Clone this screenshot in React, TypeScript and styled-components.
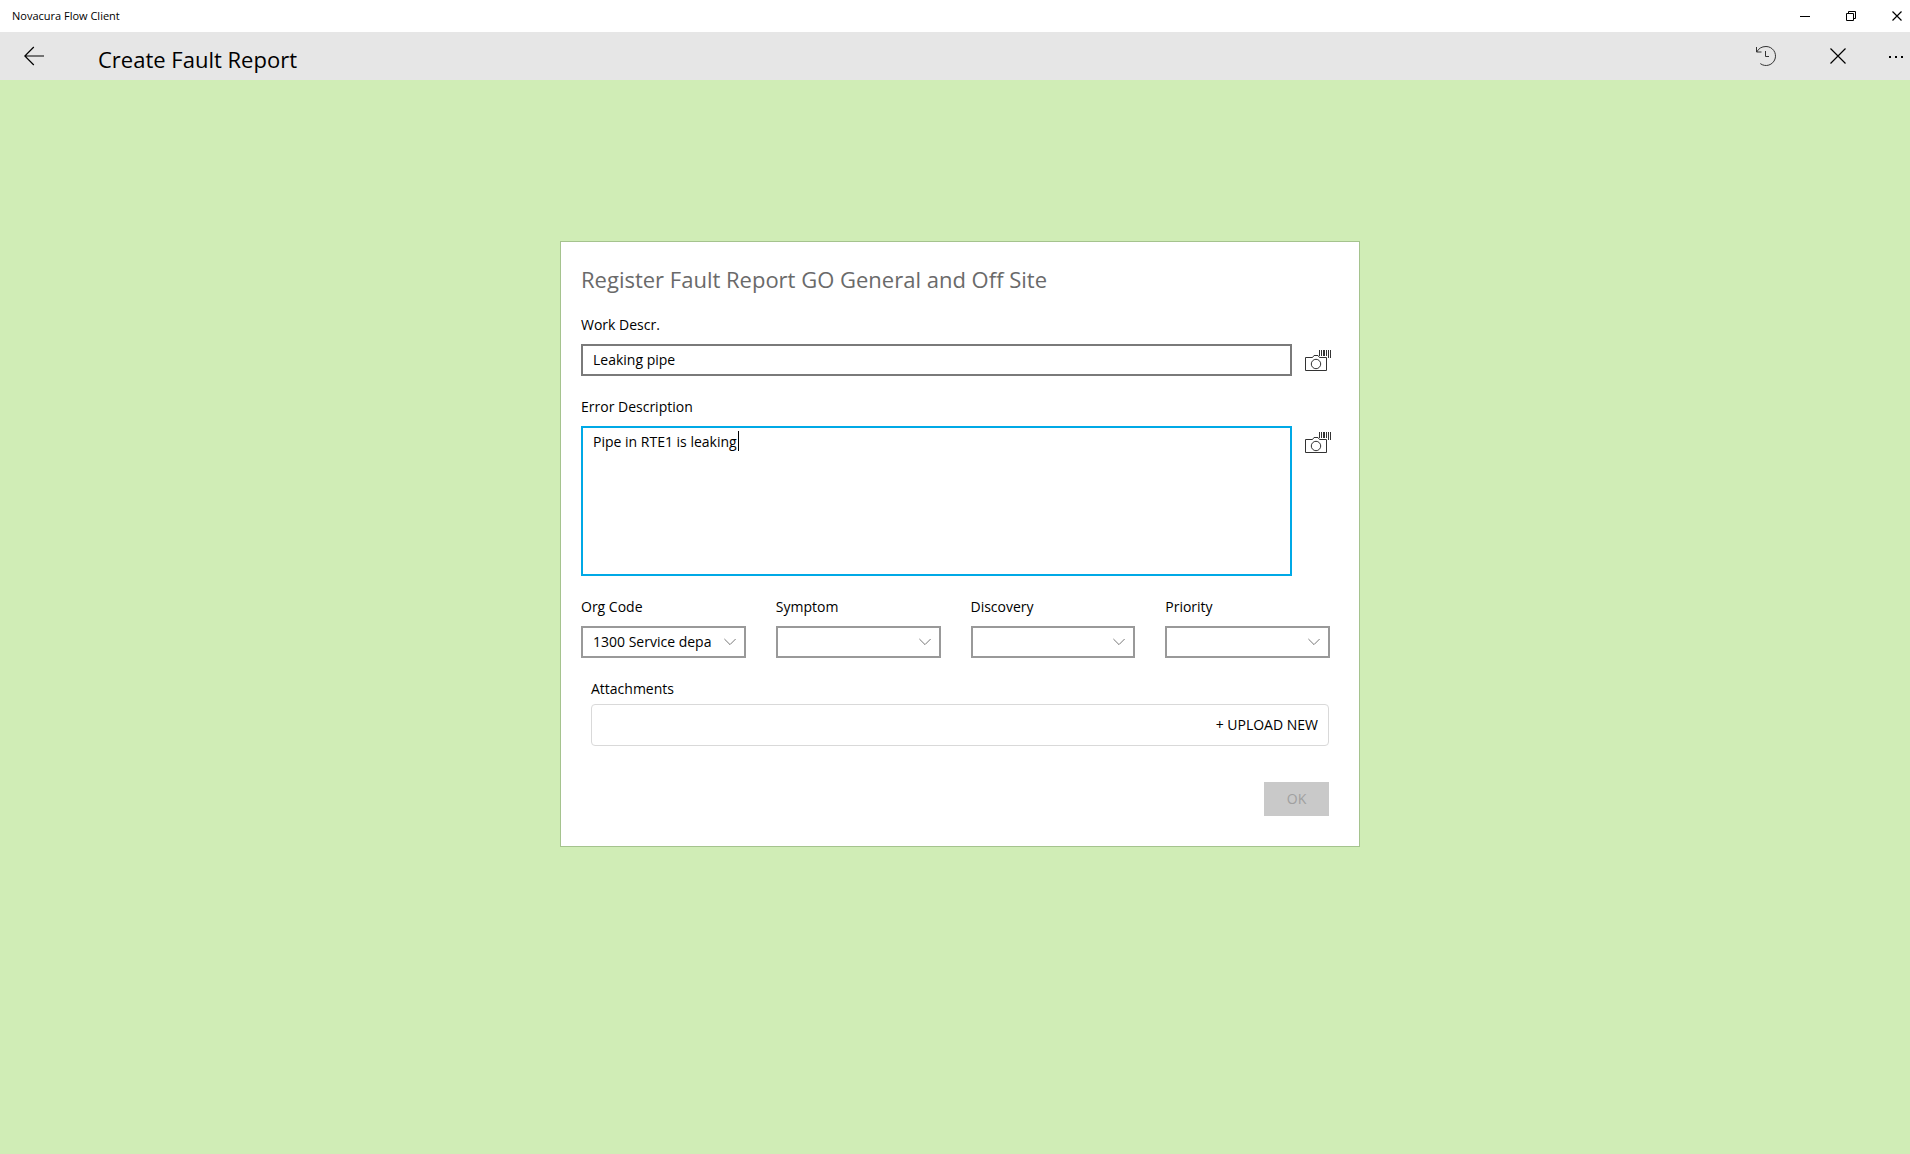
import React, { useLayoutEffect, useRef, useState } from "react";
import styled, { createGlobalStyle } from "styled-components";

const GlobalStyle = createGlobalStyle`
  * { box-sizing: border-box; }
  body {
    margin: 0;
    background: #d0edb6;
    color: #000;
    font-family: "Segoe UI", "Open Sans", "Noto Sans", sans-serif;
    font-size: 14px;
    line-height: 20px;
  }
  button, input, select, textarea { font: inherit; color: inherit; margin: 0; }
`;

const Page = styled.div`
  display: flex;
  flex-direction: column;
  min-height: 100vh;
`;

const TitleBar = styled.header`
  display: flex;
  align-items: center;
  justify-content: space-between;
  height: 32px;
  padding-left: 12px;
  background: #fff;
  font-size: 11px;
  line-height: 16px;
`;

const WindowControls = styled.div`
  display: flex;
  gap: 20px;
`;

const IconButton = styled.button<{ $width: number; $height: number }>`
  display: flex;
  align-items: center;
  justify-content: center;
  width: ${(p) => p.$width}px;
  height: ${(p) => p.$height}px;
  padding: 0;
  border: 0;
  background: transparent;
`;

const MoreButton = styled(IconButton)`
  padding-left: 8px;
`;

const AppBar = styled.nav`
  display: flex;
  align-items: center;
  height: 48px;
  background: #e6e6e6;
`;

const AppTitle = styled.h1`
  flex: 1;
  margin: 0;
  padding: 6px 0 0 30px;
  font-size: 22px;
  font-weight: 400;
  line-height: 32px;
`;

const Main = styled.main`
  display: flex;
  justify-content: center;
  padding: 161px 0 40px 10px;
`;

const Card = styled.form`
  width: 100%;
  max-width: 800px;
  padding: 21px 28px 30px 20px;
  border: 1px solid #a5c38e;
  background: #fff;
`;

const Heading = styled.h2`
  margin: 0 0 20px;
  color: #6a6a6a;
  font-size: 22px;
  font-weight: 400;
  line-height: 32px;
`;

const Field = styled.div`
  display: flex;
  flex-direction: column;
  gap: 9px;
  margin-bottom: 21px;
`;

const FieldRow = styled.div`
  display: flex;
  align-items: flex-start;
  gap: 13px;
`;

const TextInput = styled.input`
  flex: 1;
  min-width: 0;
  height: 32px;
  padding: 0 10px 2px;
  border: 2px solid #7a7a7a;
  border-radius: 0;
  outline: 0;
`;

const EditorBox = styled.div`
  position: relative;
  flex: 1;
  min-width: 0;
  height: 150px;
`;

const TextArea = styled.textarea`
  display: block;
  width: 100%;
  height: 100%;
  padding: 4px 10px;
  border: 2px solid #00a9e6;
  border-radius: 0;
  outline: 0;
  resize: none;
  caret-color: transparent;
`;

const Caret = styled.span`
  position: absolute;
  top: 5px;
  width: 1px;
  height: 20px;
  background: #000;
`;

const ScanButton = styled.button`
  display: flex;
  justify-content: center;
  width: 26px;
  height: 32px;
  padding: 5px 0 0;
  border: 0;
  background: transparent;
`;

const SelectGrid = styled.div`
  display: grid;
  grid-template-columns: repeat(4, 1fr);
  gap: 30px;
  padding-right: 1px;
`;

const SelectBox = styled.div`
  display: grid;
  align-items: center;

  > * { grid-area: 1 / 1; }
  > svg {
    justify-self: end;
    margin-right: 10px;
    pointer-events: none;
  }
`;

const Select = styled.select`
  width: 100%;
  height: 32px;
  padding: 0 30px 0 10px;
  border: 2px solid #999;
  border-radius: 0;
  background: #fff;
  appearance: none;
`;

const Attachments = styled.section`
  display: flex;
  flex-direction: column;
  gap: 5px;
  margin: 0 2px 36px 10px;
`;

const SectionTitle = styled.h3`
  margin: 0;
  font-size: 14px;
  font-weight: 400;
  line-height: 20px;
`;

const UploadBox = styled.div`
  display: flex;
  justify-content: flex-end;
  align-items: center;
  height: 42px;
  padding-right: 10px;
  border: 1px solid #d9d9d9;
  border-radius: 4px;
`;

const UploadButton = styled.button`
  padding: 0;
  border: 0;
  background: transparent;
`;

const Actions = styled.div`
  display: flex;
  justify-content: flex-end;
  padding-right: 2px;
`;

const OkButton = styled.button`
  width: 65px;
  height: 34px;
  padding: 0;
  border: 0;
  background: #c9c9c9;
  color: #a0a0a0;
`;

const BackIcon = () => (
  <svg width="20" height="20" viewBox="0 0 20 20" fill="none" stroke="#000" strokeWidth="1.2">
    <path d="M20 10H1M9.8 1L.8 10l9 9" />
  </svg>
);

const HistoryIcon = () => (
  <svg width="22" height="22" viewBox="0 0 22 22" fill="none" stroke="#333" strokeWidth="1">
    <path d="M1.5 2v5h5M1.8 7C3.3 3.6 6.700 1.500 11 1.500a9.500 9.500 0 1 1-5.700 17.100" />
    <path d="M10.500 6v5.500h3.500" />
  </svg>
);

const CloseIcon = ({ size }: { size: number }) => (
  <svg width={size} height={size} viewBox={`0 0 ${size} ${size}`} stroke="#000" strokeWidth="1.2">
    <path d={`M.5 .5L${size - 0.5} ${size - 0.5}M${size - 0.5} .5L.5 ${size - 0.5}`} />
  </svg>
);

const ChevronIcon = () => (
  <svg width="12" height="8" viewBox="0 0 12 8" fill="none" stroke="#777" strokeWidth="1">
    <path d="M.4 1L6 6.600 11.600 1" />
  </svg>
);

const CameraIcon = () => (
  <svg width="26" height="24" viewBox="0 0 26 24" fill="none" stroke="#333" strokeWidth="1">
    <path d="M14.500 8.500H21.500V21.500H.5V8.500H7.500L9 6.500H13L14.500 8.500" />
    <circle cx="11" cy="15" r="4.700" />
    <path d="M14.500 1v6M16.500 1v6M21.500 1v6M23.500 1v8M25.500 1v8" />
    <path d="M19 1v6" strokeWidth="2" />
  </svg>
);

function ScanAction({ label }: { label: string }) {
  return (
    <ScanButton type="button" aria-label={label}>
      <CameraIcon />
    </ScanButton>
  );
}

function DescriptionEditor({ id }: { id: string }) {
  const [value, setValue] = useState("Pipe in RTE1 is leaking");
  const [caretX, setCaretX] = useState(0);
  const areaRef = useRef<HTMLTextAreaElement>(null);

  useLayoutEffect(() => {
    const area = areaRef.current;
    const context = document.createElement("canvas").getContext("2d");
    if (!area || !context) return;
    context.font = getComputedStyle(area).font;
    const lastLine = value.split("\n").pop() ?? "";
    setCaretX(Math.round(context.measureText(lastLine).width) + 13);
  }, [value]);

  return (
    <EditorBox>
      <TextArea
        id={id}
        ref={areaRef}
        value={value}
        spellCheck={false}
        onChange={(e) => setValue(e.target.value)}
      />
      <Caret style={{ left: caretX }} />
    </EditorBox>
  );
}

const selectors = [
  { id: "org-code", label: "Org Code", value: "1300 Service depa" },
  { id: "symptom", label: "Symptom", value: "" },
  { id: "discovery", label: "Discovery", value: "" },
  { id: "priority", label: "Priority", value: "" },
];

export default function App() {
  return (
    <Page>
      <GlobalStyle />
      <TitleBar>
        <span>Novacura Flow Client</span>
        <WindowControls>
          <IconButton $width={26} $height={32} aria-label="Minimize">
            <svg width="10" height="10" viewBox="0 0 10 10" stroke="#000">
              <path d="M0 5.500H10" />
            </svg>
          </IconButton>
          <IconButton $width={26} $height={32} aria-label="Restore">
            <svg width="10" height="10" viewBox="0 0 10 10" fill="none" stroke="#000">
              <path d="M.5 2.500h7v7h-7zM2.500 2.500v-2h7v7h-2" />
            </svg>
          </IconButton>
          <IconButton $width={26} $height={32} aria-label="Close window">
            <CloseIcon size={10} />
          </IconButton>
        </WindowControls>
      </TitleBar>
      <AppBar>
        <IconButton $width={68} $height={48} aria-label="Back">
          <BackIcon />
        </IconButton>
        <AppTitle>Create Fault Report</AppTitle>
        <IconButton $width={72} $height={48} aria-label="History">
          <HistoryIcon />
        </IconButton>
        <IconButton $width={72} $height={48} aria-label="Close">
          <CloseIcon size={16} />
        </IconButton>
        <MoreButton $width={36} $height={48} aria-label="More">
          <svg width="14" height="4" viewBox="0 0 14 4" fill="#000">
            <path d="M0 2h2v2H0zM6 2h2v2H6zM12 2h2v2h-2z" />
          </svg>
        </MoreButton>
      </AppBar>
      <Main>
        <Card onSubmit={(e) => e.preventDefault()}>
          <Heading>Register Fault Report GO General and Off Site</Heading>
          <Field>
            <label htmlFor="work-descr">Work Descr.</label>
            <FieldRow>
              <TextInput id="work-descr" type="text" defaultValue="Leaking pipe" />
              <ScanAction label="Scan work description" />
            </FieldRow>
          </Field>
          <Field>
            <label htmlFor="error-description">Error Description</label>
            <FieldRow>
              <DescriptionEditor id="error-description" />
              <ScanAction label="Scan error description" />
            </FieldRow>
          </Field>
          <SelectGrid>
            {selectors.map((s) => (
              <Field key={s.id}>
                <label htmlFor={s.id}>{s.label}</label>
                <SelectBox>
                  <Select id={s.id} defaultValue={s.value}>
                    <option value={s.value}>{s.value}</option>
                  </Select>
                  <ChevronIcon />
                </SelectBox>
              </Field>
            ))}
          </SelectGrid>
          <Attachments>
            <SectionTitle>Attachments</SectionTitle>
            <UploadBox>
              <UploadButton type="button">+ UPLOAD NEW</UploadButton>
            </UploadBox>
          </Attachments>
          <Actions>
            <OkButton type="submit" disabled>OK</OkButton>
          </Actions>
        </Card>
      </Main>
    </Page>
  );
}
